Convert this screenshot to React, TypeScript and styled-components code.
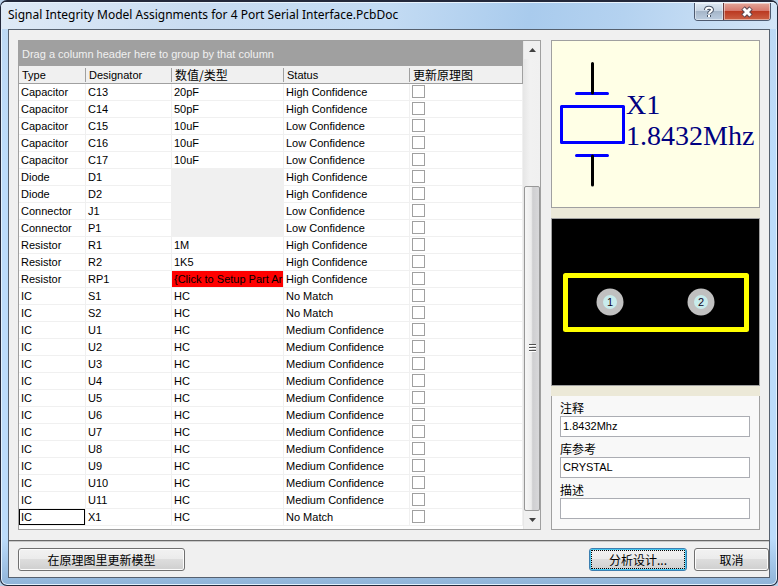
import React, { useState } from "react";
import styled, { createGlobalStyle, css } from "styled-components";

const uiFont = `"Liberation Sans", "Noto Sans CJK SC", sans-serif`;
const cjkFont = `"Noto Sans CJK SC", sans-serif`;

const GlobalStyle = createGlobalStyle`
  * { box-sizing: border-box; }
  html, body { margin: 0; padding: 0; }
  body { font: 11px/16px ${uiFont}; color: #000; background: #b9d1ea; }
  button, input { font: inherit; color: inherit; }
`;

const Frame = styled.div`
  display: flex;
  flex-direction: column;
  min-height: 100vh;
  padding: 0 7px 7px;
  border: 1px solid #23283a;
  border-top-width: 2px;
  border-radius: 7px;
  background: linear-gradient(#bdd8f3, #bcdcfb 28%, #bcdcfb 92%, #8fb3d8);
  box-shadow: inset 0 0 0 1px #e3f1fd;
`;

const TitleBar = styled.header`
  display: flex;
  justify-content: space-between;
  align-items: flex-start;
  height: 27px;
  margin: 0 -7px;
  padding: 0 6px 0 7px;
  border-radius: 5px 5px 0 0;
  border-top: 1px solid #e8f3fd;
  background: linear-gradient(100deg, #dfeaf6, #c9dcf1 25%, #c3dbf3 50%, #a9cbed 68%, #b4d2f0 80%, #d3e5f7);
`;

const Title = styled.h1`
  margin: 0;
  font: 400 12px/24px "Noto Sans", sans-serif;
  white-space: nowrap;
`;

const Captions = styled.div`
  display: flex;
  border: 1px solid #4d5a70;
  border-top: 0;
  border-radius: 0 0 4px 4px;
  overflow: hidden;
`;

const Caption = styled.button<{ $close?: boolean }>`
  display: flex;
  align-items: center;
  justify-content: center;
  width: ${(p) => (p.$close ? 47 : 28)}px;
  height: 17px;
  padding: 0;
  border: 0;
  box-shadow: inset 0 0 0 1px rgba(255, 255, 255, 0.45);
  background: ${(p) =>
    p.$close
      ? "linear-gradient(#e3a699, #d5766a 48%, #bb3a22 50%, #cc6145)"
      : "linear-gradient(#dde8f3, #c5d3e2 48%, #a5b6c9 50%, #bccde0)"};
  border-left: ${(p) => (p.$close ? "1px solid #6b3a3c" : "0")};
`;

const Client = styled.main`
  flex: 1;
  display: flex;
  flex-direction: column;
  border: 1px solid #56616f;
  background: #f0f0f0;
`;

const Content = styled.div`
  flex: 1;
  display: flex;
  gap: 10px;
  padding: 10px 9px;
`;

const GridPanel = styled.section`
  flex: 1;
  min-width: 0;
  display: flex;
  border: 1px solid #a0a0a0;
  background: #fff;
`;

const GridBody = styled.div`
  flex: 1;
  min-width: 0;
`;

const GroupBar = styled.div`
  height: 25px;
  padding: 0 3px;
  line-height: 27px;
  color: #f0f0f0;
  background: #a0a0a0;
`;

const Table = styled.table`
  width: 100%;
  table-layout: fixed;
  border-collapse: separate;
  border-spacing: 0;
`;

const Col = styled.col<{ $width?: number }>`
  width: ${(p) => (p.$width ? `${p.$width}px` : "auto")};
`;

const HeadCell = styled.th`
  height: 18px;
  padding: 0;
  font-weight: 400;
  text-align: left;
  background: #f0f0f0;
  border-bottom: 1px solid #a0a0a0;
  &:last-child { border-right: 1px solid #a0a0a0; }
`;

const HeadLabel = styled.span<{ $cjk?: boolean; $last?: boolean }>`
  display: block;
  height: 14px;
  padding-left: 3px;
  line-height: 14px;
  white-space: nowrap;
  border-right: ${(p) => (p.$last ? "0" : "1px solid #a0a0a0")};
  ${(p) => p.$cjk && css`font: 12px/14px ${cjkFont};`}
`;

type Tone = "plain" | "blank" | "alert";

const Cell = styled.td<{ $tone?: Tone; $focused?: boolean }>`
  height: 17px;
  padding: 0 0 0 2px;
  line-height: 16px;
  vertical-align: top;
  white-space: nowrap;
  overflow: hidden;
  border-right: 1px solid #f0f0f0;
  border-bottom: 1px solid #f0f0f0;
  background: ${(p) =>
    p.$tone === "alert" ? "#f00" : p.$tone === "blank" ? "#f0f0f0" : "#fff"};
  background-clip: padding-box;
  box-shadow: ${(p) => (p.$focused ? "inset 0 0 0 1px #000" : "none")};
`;

const Tick = styled.input`
  appearance: none;
  display: block;
  width: 13px;
  height: 13px;
  margin: 1px 0;
  border: 1px solid #a0a0a0;
  background: #fff;
  &:checked { background: #316ac5; box-shadow: inset 0 0 0 2px #fff; }
`;

const ScrollTrack = styled.div`
  display: flex;
  flex-direction: column;
  width: 17px;
  padding-left: 1px;
  background: linear-gradient(90deg, #e6e6e6, #f1f1f1 40%, #f0f0f0);
`;

const ScrollArrow = styled.button`
  display: flex;
  align-items: center;
  justify-content: center;
  height: 18px;
  padding: 0;
  border: 0;
  background: #f0f0f0;
`;

const ScrollRun = styled.div`
  flex: 1;
  display: flex;
  flex-direction: column;
  justify-content: flex-end;
`;

const ScrollThumb = styled.div`
  display: flex;
  align-items: center;
  justify-content: center;
  height: 72%;
  border: 1px solid #979797;
  border-radius: 2px;
  background: linear-gradient(90deg, #f6f6f6, #ececec 45%, #cfcfd1 55%, #d8d8da);
`;

const Side = styled.aside`
  flex: none;
  display: flex;
  flex-direction: column;
  gap: 10px;
  width: 209px;
  background: #ece9d8;
`;

const Preview = styled.figure<{ $dark?: boolean }>`
  flex: none;
  margin: 0;
  height: 168px;
  border: 1px solid #a0a0a0;
  background: ${(p) => (p.$dark ? "#000" : "#ffffe6")};
  svg { display: block; width: 100%; height: 100%; }
`;

const Details = styled.form`
  flex: 1;
  display: flex;
  flex-direction: column;
  gap: 4px;
  padding: 4px 9px 0 8px;
  border: 1px solid #a0a0a0;
  border-top: 0;
  background: #f8f8f8;
`;

const Field = styled.label`
  display: flex;
  flex-direction: column;
  font: 12px/16px ${cjkFont};
`;

const TextBox = styled.input`
  width: 100%;
  height: 21px;
  padding: 0 2px 2px;
  border: 1px solid #abadb3;
  border-radius: 0;
  background: #fff;
  font: 11px/16px ${uiFont};
`;

const Footer = styled.footer`
  display: flex;
  align-items: flex-start;
  gap: 7px;
  padding: 7px 0 6px 9px;
  border-top: 1px solid #696969;
  box-shadow: inset 0 1px 0 #c8c8c8;
`;

const Push = styled.span`
  flex: 1;
`;

const Button = styled.button<{ $width: number; $primary?: boolean }>`
  width: ${(p) => p.$width}px;
  height: 23px;
  padding: 0;
  font: 12px/17px ${cjkFont};
  border: 1px solid ${(p) => (p.$primary ? "#3c7fb1" : "#707070")};
  border-radius: 3px;
  background: linear-gradient(#f2f2f2, #ebebeb 48%, #dddddd 50%, #cfcfcf);
  box-shadow: inset 0 0 0 1px ${(p) => (p.$primary ? "#48c8f0" : "#fcfcfc")};
  ${(p) => p.$primary && css`
    outline: 1px dotted #000;
    outline-offset: -3px;
  `}
`;

interface Part {
  type: string;
  designator: string;
  value: string;
  status: string;
  tone?: Tone;
}

const part = (type: string, designator: string, value: string, status: string, tone?: Tone): Part => ({
  type, designator, value, status, tone,
});

const HIGH = "High Confidence";
const MEDIUM = "Medium Confidence";
const LOW = "Low Confidence";
const NONE = "No Match";

const parts: Part[] = [
  part("Capacitor", "C13", "20pF", HIGH),
  part("Capacitor", "C14", "50pF", HIGH),
  part("Capacitor", "C15", "10uF", LOW),
  part("Capacitor", "C16", "10uF", LOW),
  part("Capacitor", "C17", "10uF", LOW),
  part("Diode", "D1", "", HIGH, "blank"),
  part("Diode", "D2", "", HIGH, "blank"),
  part("Connector", "J1", "", LOW, "blank"),
  part("Connector", "P1", "", LOW, "blank"),
  part("Resistor", "R1", "1M", HIGH),
  part("Resistor", "R2", "1K5", HIGH),
  part("Resistor", "RP1", "{Click to Setup Part Arr", HIGH, "alert"),
  part("IC", "S1", "HC", NONE),
  part("IC", "S2", "HC", NONE),
  ...Array.from({ length: 11 }, (_, i) => part("IC", `U${i + 1}`, "HC", MEDIUM)),
  part("IC", "X1", "HC", NONE),
];

const SchematicSymbol = () => (
  <svg viewBox="0 0 207 166" role="img" aria-label="X1 1.8432Mhz">
    <g fill="none" strokeWidth="3" strokeLinecap="round">
      <path d="M24.5 52.5H55.5M24.5 114.5H55.5" stroke="#00f" />
      <rect x="9.5" y="65.5" width="62" height="36" stroke="#00f" strokeLinejoin="round" />
      <path d="M40.5 22.5V52M40.5 115V144" stroke="#000" />
    </g>
    <g fill="#000080" fontFamily="Liberation Serif, serif" fontSize="28">
      <text x="74" y="73">X1</text>
      <text x="74" y="104">1.8432Mhz</text>
    </g>
  </svg>
);

const Footprint = () => (
  <svg viewBox="0 0 207 166" role="img" aria-label="Footprint">
    <rect x="13.5" y="56.5" width="181" height="54" fill="none" stroke="#ff0" strokeWidth="5" strokeLinejoin="round" />
    {[58, 149].map((x, i) => (
      <g key={x}>
        <circle cx={x} cy="83" r="13.5" fill="#c0c0c0" />
        <circle cx={x} cy="83" r="7" fill="#c8ecec" />
        <text x={x} y="87" textAnchor="middle" fontFamily="Liberation Sans, sans-serif" fontSize="11" fill="#102">
          {i + 1}
        </text>
      </g>
    ))}
  </svg>
);

export default function App() {
  const [ticked, setTicked] = useState<string[]>([]);
  const toggle = (id: string) =>
    setTicked((all) => (all.includes(id) ? all.filter((x) => x !== id) : [...all, id]));

  return (
    <>
      <GlobalStyle />
      <Frame>
        <TitleBar>
          <Title>Signal Integrity Model Assignments for 4 Port Serial Interface.PcbDoc</Title>
          <Captions>
            <Caption aria-label="Help">
              <svg width="12" height="14" viewBox="0 0 12 14" fill="none">
                <path d="M3 5C3 2 9 2 9 4.8C9 6.8 6 6.5 6 8.8M6 10V12" stroke="#4b5668" strokeWidth="4" />
                <path d="M3 5C3 2 9 2 9 4.8C9 6.8 6 6.5 6 8.8M6 10V12" stroke="#fff" strokeWidth="2" />
              </svg>
            </Caption>
            <Caption $close aria-label="Close">
              <svg width="14" height="12" viewBox="0 0 14 12" fill="none">
                <path d="M3 2L11 10M11 2L3 10" stroke="#5a4650" strokeWidth="5" />
                <path d="M3.5 2.5L10.5 9.5M10.5 2.5L3.5 9.5" stroke="#fff" strokeWidth="3" />
              </svg>
            </Caption>
          </Captions>
        </TitleBar>
        <Client>
          <Content>
            <GridPanel>
              <GridBody>
                <GroupBar>Drag a column header here to group by that column</GroupBar>
                <Table>
                  <colgroup>
                    <Col $width={67} />
                    <Col $width={86} />
                    <Col $width={112} />
                    <Col $width={126} />
                    <Col />
                  </colgroup>
                  <thead>
                    <tr>
                      <HeadCell><HeadLabel>Type</HeadLabel></HeadCell>
                      <HeadCell><HeadLabel>Designator</HeadLabel></HeadCell>
                      <HeadCell><HeadLabel $cjk>数值/类型</HeadLabel></HeadCell>
                      <HeadCell><HeadLabel>Status</HeadLabel></HeadCell>
                      <HeadCell><HeadLabel $cjk $last>更新原理图</HeadLabel></HeadCell>
                    </tr>
                  </thead>
                  <tbody>
                    {parts.map((p) => (
                      <tr key={p.designator}>
                        <Cell $focused={p.designator === "X1"}>{p.type}</Cell>
                        <Cell>{p.designator}</Cell>
                        <Cell $tone={p.tone}>{p.value}</Cell>
                        <Cell>{p.status}</Cell>
                        <Cell>
                          <Tick
                            type="checkbox"
                            aria-label={`更新原理图 ${p.designator}`}
                            checked={ticked.includes(p.designator)}
                            onChange={() => toggle(p.designator)}
                          />
                        </Cell>
                      </tr>
                    ))}
                  </tbody>
                </Table>
              </GridBody>
              <ScrollTrack>
                <ScrollArrow aria-label="Scroll up">
                  <svg width="7" height="4" viewBox="0 0 7 4"><path d="M0 4L3.5 0L7 4Z" fill="#404040" /></svg>
                </ScrollArrow>
                <ScrollRun>
                  <ScrollThumb>
                    <svg width="7" height="8" viewBox="0 0 7 8"><path d="M0 .5H7M0 3.5H7M0 6.5H7" stroke="#505050" /><path d="M0 1.5H7M0 4.5H7M0 7.5H7" stroke="#fff" /></svg>
                  </ScrollThumb>
                </ScrollRun>
                <ScrollArrow aria-label="Scroll down">
                  <svg width="7" height="4" viewBox="0 0 7 4"><path d="M0 0L3.5 4L7 0Z" fill="#404040" /></svg>
                </ScrollArrow>
              </ScrollTrack>
            </GridPanel>
            <Side>
              <Preview><SchematicSymbol /></Preview>
              <Preview $dark><Footprint /></Preview>
              <Details>
                <Field>注释<TextBox defaultValue="1.8432Mhz" /></Field>
                <Field>库参考<TextBox defaultValue="CRYSTAL" /></Field>
                <Field>描述<TextBox defaultValue="" /></Field>
              </Details>
            </Side>
          </Content>
          <Footer>
            <Button $width={167}>在原理图里更新模型</Button>
            <Push />
            <Button $width={98} $primary>分析设计...</Button>
            <Button $width={75}>取消</Button>
          </Footer>
        </Client>
      </Frame>
    </>
  );
}
